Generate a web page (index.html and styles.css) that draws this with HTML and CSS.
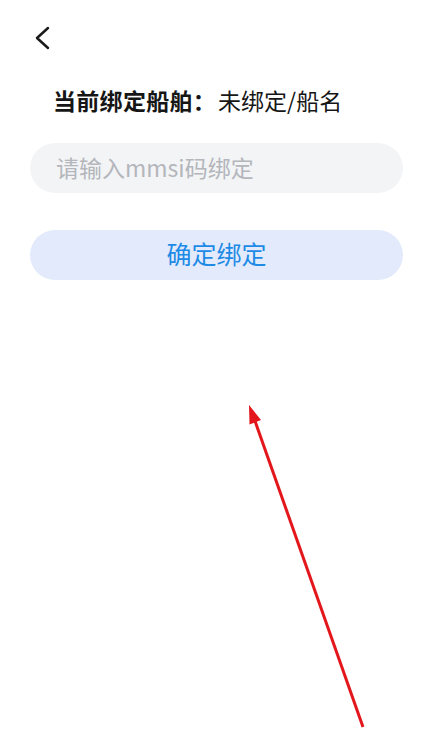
FILE: index.html
```html
<!DOCTYPE html>
<html lang="zh">
<head>
<meta charset="utf-8">
<title>绑定船舶</title>
<link rel="stylesheet" href="styles.css">
</head>
<body>
<div class="page">
  <div class="nav">
    <svg class="back" width="18" height="24" viewBox="0 0 18 24"><path d="M14 2 L3 12 L14 22" fill="none" stroke="#1a1a1a" stroke-width="2.5" stroke-linecap="round" stroke-linejoin="round"/></svg>
  </div>
  <div class="content">
    <div class="title"><span class="label">当前绑定船舶：</span><span class="value">未绑定/船名</span></div>
    <div class="input"><span class="placeholder">请输入mmsi码绑定</span></div>
    <div class="button">确定绑定</div>
  </div>
  <svg class="arrow" width="433" height="750" viewBox="0 0 433 750">
    <line x1="363" y1="727" x2="255" y2="421" stroke="#e3161b" stroke-width="3"/>
    <polygon points="249,405 261,420 249.5,424.5" fill="#e3161b"/>
  </svg>
</div>
</body>
</html>
```
FILE: styles.css
```css
html, body {
  margin: 0;
  padding: 0;
  background: #ffffff;
}
body {
  font-family: "Noto Sans CJK SC", "Noto Sans", sans-serif;
  color: #161616;
}
.page {
  position: relative;
  width: 433px;
  height: 750px;
  overflow: hidden;
}
.nav {
  height: 50px;
  padding: 26px 0 0 34px;
  box-sizing: border-box;
}
.back {
  display: block;
}
.content {
  padding: 0 30px;
}
.title {
  margin-top: 35px;
  padding-left: 23px;
  height: 30px;
  line-height: 30px;
  font-size: 23px;
  display: flex;
  align-items: center;
}
.label {
  font-weight: 700;
  letter-spacing: 0.3px;
}
.value {
  font-weight: 400;
  margin-left: 2px;
}
.input {
  margin-top: 28px;
  height: 50px;
  box-sizing: border-box;
  padding-bottom: 3px;
  border-radius: 25px;
  background: #f3f4f6;
  display: flex;
  align-items: center;
  padding-left: 26px;
}
.placeholder {
  font-size: 23px;
  color: #b3b6bb;
}
.button {
  margin-top: 37px;
  height: 50px;
  box-sizing: border-box;
  padding-bottom: 4px;
  border-radius: 25px;
  background: #e2eafb;
  display: flex;
  align-items: center;
  justify-content: center;
  font-size: 25px;
  color: #1d8ae6;
}
.arrow {
  position: absolute;
  left: 0;
  top: 0;
  pointer-events: none;
}
```
